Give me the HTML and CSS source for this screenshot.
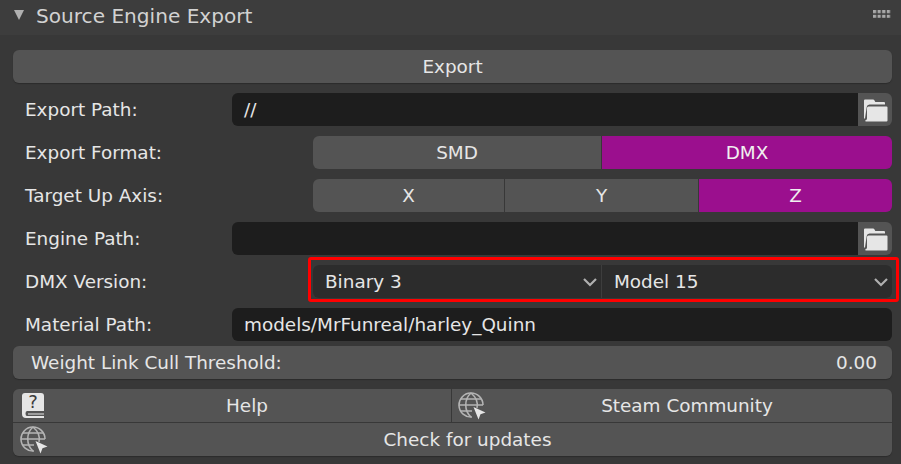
FILE: index.html
```html
<!DOCTYPE html>
<html lang="en">
<head>
    <meta charset="UTF-8">
    <title>Source Engine Export</title>
    <link rel="stylesheet" href="styles.css">
</head>
<body>
    <svg class="icon-defs" width="0" height="0">
        <symbol id="folder" viewBox="0 0 26 26">
            <path d="M2 3.500q0-1 1-1h8q1 0 1.500 1l.8 1.500h8.700q1 0 1 1v1.500h-15.500q-2.500 0-2.800 2.500l-1.700 11.500h-1z" fill="#e6e6e6"/>
            <path d="M6.500 9.500h18q1 0 1 1v13q0 1-1 1h-20.500q-1 0-.8-1q1.800-.5 1.800-2v-10.500q0-1.500 1.500-1.500z" fill="#e6e6e6"/>
        </symbol>
        <symbol id="globe" viewBox="0 0 28 28">
            <g fill="none" stroke="#b4b4b4" stroke-width="1.600">
                <path d="M25 13a12 12 0 1 0-11 12"/>
                <path d="M13 1c-7 6-7 18 0 24M13 1c5.500 4.500 7 10 6 15"/>
                <path d="M3 7h20M1 13h24M3 19h11"/>
            </g>
            <path d="M15.500 15l12 5.500-5 1.800-2 5.200z" fill="#e6e6e6"/>
        </symbol>
    </svg>

    <div class="panel">
        <div class="panel-header">
            <span class="arrow"></span>
            <span class="panel-title">Source Engine Export</span>
            <svg class="grip" width="18" height="8">
                <pattern id="grip-dot" width="4.600" height="4.800" patternUnits="userSpaceOnUse">
                    <rect width="3.200" height="3.200" fill="#a8a8a8"/>
                </pattern>
                <rect width="18" height="8" fill="url(#grip-dot)"/>
            </svg>
        </div>

        <div class="panel-body">
            <button class="btn btn-full">Export</button>

            <div class="row">
                <label>Export Path:</label>
                <div class="path-field">
                    <div class="input">//</div>
                    <button class="folder-btn"><svg width="26" height="26"><use href="#folder"/></svg></button>
                </div>
            </div>

            <div class="row row-seg">
                <label>Export Format:</label>
                <div class="seg seg-two">
                    <button class="btn">SMD</button>
                    <button class="btn active">DMX</button>
                </div>
            </div>

            <div class="row row-seg">
                <label>Target Up Axis:</label>
                <div class="seg seg-three">
                    <button class="btn">X</button>
                    <button class="btn">Y</button>
                    <button class="btn active">Z</button>
                </div>
            </div>

            <div class="row">
                <label>Engine Path:</label>
                <div class="path-field">
                    <div class="input"></div>
                    <button class="folder-btn"><svg width="26" height="26"><use href="#folder"/></svg></button>
                </div>
            </div>

            <div class="row row-seg">
                <label>DMX Version:</label>
                <div class="seg seg-two seg-dark">
                    <div class="dropdown">Binary 3<svg class="chevron" width="16" height="10" viewBox="0 0 16 10"><path d="M2 2l6 6 6-6" fill="none" stroke="#b0b0b0" stroke-width="2.200"/></svg></div>
                    <div class="dropdown">Model 15<svg class="chevron" width="16" height="10" viewBox="0 0 16 10"><path d="M2 2l6 6 6-6" fill="none" stroke="#b0b0b0" stroke-width="2.200"/></svg></div>
                </div>
                <div class="highlight"></div>
            </div>

            <div class="row">
                <label>Material Path:</label>
                <div class="path-field">
                    <div class="input input-round">models/MrFunreal/harley_Quinn</div>
                </div>
            </div>

            <div class="slider">
                <span>Weight Link Cull Threshold:</span>
                <span>0.00</span>
            </div>

            <div class="links">
                <div class="links-row">
                    <button class="btn link-btn">
                        <svg class="link-icon" width="28" height="28" viewBox="0 0 28 28">
                            <path d="M2 4q0-3 3-3h16q3 0 3 3v15h-17q-1.500 0-1.500 2.500t1.500 2.500h17v2h-18q-4 0-4-4z" fill="#e6e6e6"/>
                            <path d="M8 21.500h16v1h-16z" fill="#e6e6e6"/>
                            <text x="13" y="16" class="help-mark">?</text>
                        </svg>
                        Help
                    </button>
                    <button class="btn link-btn">
                        <svg class="link-icon" width="28" height="28"><use href="#globe"/></svg>
                        Steam Community
                    </button>
                </div>
                <button class="btn link-btn">
                    <svg class="link-icon" width="28" height="28"><use href="#globe"/></svg>
                    Check for updates
                </button>
            </div>
        </div>
    </div>
</body>
</html>
```

FILE: styles.css
```css
html, body {
    margin: 0;
    padding: 0;
}
body {
    width: 901px;
    height: 464px;
    overflow: hidden;
    background-color: #383838;
    font-family: "DejaVu Sans", sans-serif;
    font-size: 18.4px;
    color: #e6e6e6;
}
.icon-defs {
    position: absolute;
}
.panel-header {
    height: 35px;
    background-color: #3d3d3d;
    display: flex;
    align-items: center;
    padding-left: 14px;
    padding-right: 10px;
    box-sizing: border-box;
}
.arrow {
    width: 0;
    height: 0;
    border-left: 5.5px solid transparent;
    border-right: 5.5px solid transparent;
    border-top: 10px solid #b0b0b0;
    margin-right: 12px;
    margin-top: -6px;
}
.panel-title {
    font-size: 20.1px;
    color: #d2d2d2;
    flex: 1;
    margin-top: -4px;
}
.grip {
    margin-top: -8px;
}
.panel-body {
    padding: 15px 9px 0 13px;
    display: flex;
    flex-direction: column;
    gap: 10px;
}
.btn {
    height: 33px;
    padding: 0;
    border: none;
    background-color: #545454;
    color: #e6e6e6;
    font-family: inherit;
    font-size: 18.4px;
}
.btn-full {
    border-radius: 6px;
    box-shadow: 0 1px 1px #2c2c2c;
}
.row {
    position: relative;
    display: flex;
    align-items: center;
    height: 33px;
}
.row label {
    width: 219px;
    padding-left: 12px;
    box-sizing: border-box;
    flex-shrink: 0;
}
.row-seg label {
    width: 300px;
}
.path-field {
    flex: 1;
    display: flex;
    height: 33px;
}
.input {
    flex: 1;
    background-color: #1d1d1d;
    border-radius: 6px 0 0 6px;
    padding-left: 12px;
    line-height: 33px;
    color: #e6e6e6;
}
.input-round {
    border-radius: 6px;
}
.folder-btn {
    width: 34px;
    padding: 0;
    border: none;
    background-color: #545454;
    border-radius: 0 6px 6px 0;
    display: flex;
    align-items: center;
    justify-content: center;
}
.seg {
    flex: 1;
    display: grid;
    gap: 1px;
    border-radius: 6px;
    overflow: hidden;
}
.seg-two {
    grid-template-columns: 288px 1fr;
}
.seg-three {
    grid-template-columns: 191px 193px 1fr;
}
.btn.active {
    background-color: #9b0f8e;
    color: #f0f0f0;
}
.seg-dark {
    background-color: #3d3d3d;
}
.dropdown {
    height: 33px;
    line-height: 33px;
    background-color: #2c2c2c;
    padding: 0 3px 0 12px;
    display: flex;
    justify-content: space-between;
    align-items: center;
}
.highlight {
    position: absolute;
    left: 295px;
    top: -8px;
    width: 585px;
    height: 39px;
    border: 3px solid #ff0000;
    border-radius: 3px;
}
.slider {
    height: 33px;
    margin-top: -5px;
    background-color: #545454;
    border-radius: 6px;
    display: flex;
    justify-content: space-between;
    align-items: center;
    padding: 0 15px 0 18px;
    box-shadow: 0 1px 1px #2c2c2c;
}
.links {
    display: flex;
    flex-direction: column;
    gap: 1px;
    border-radius: 6px;
    overflow: hidden;
    box-shadow: 0 1px 1px #2c2c2c;
}
.links-row {
    display: grid;
    grid-template-columns: 438px 1fr;
    gap: 1px;
}
.link-btn {
    position: relative;
    padding-left: 30px;
}
.link-icon {
    position: absolute;
    left: 7px;
    top: 3px;
}
.links-row .btn + .btn .link-icon {
    left: 6px;
}
.help-mark {
    font-family: "DejaVu Sans", sans-serif;
    font-size: 18px;
    text-anchor: middle;
    fill: #3c3c3c;
}
```
